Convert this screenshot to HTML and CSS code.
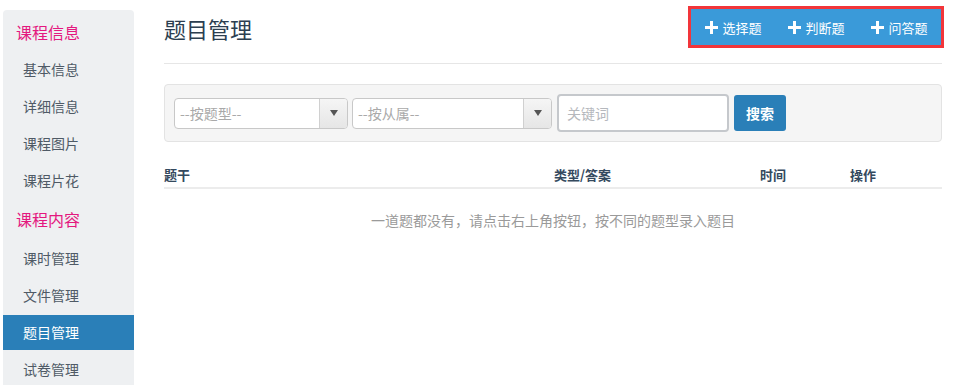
FILE: index.html
```html
<!DOCTYPE html>
<html lang="zh">
<head>
<meta charset="utf-8">
<link rel="stylesheet" href="styles.css">
</head>
<body>
<div class="layout">
  <aside class="sidebar">
    <div class="nav-group">课程信息</div>
    <a class="nav-item">基本信息</a>
    <a class="nav-item">详细信息</a>
    <a class="nav-item">课程图片</a>
    <a class="nav-item">课程片花</a>
    <div class="nav-group second">课程内容</div>
    <a class="nav-item">课时管理</a>
    <a class="nav-item">文件管理</a>
    <a class="nav-item active">题目管理</a>
    <a class="nav-item">试卷管理</a>
  </aside>
  <main class="main">
    <header class="page-header">
      <h1 class="title">题目管理</h1>
      <div class="btn-group">
        <button class="add-btn"><svg class="plus" viewBox="0 0 13 13" width="13" height="13"><rect x="5" y="0" width="3" height="13" fill="#fff"/><rect x="0" y="5" width="13" height="3" fill="#fff"/></svg>选择题</button>
        <button class="add-btn"><svg class="plus" viewBox="0 0 13 13" width="13" height="13"><rect x="5" y="0" width="3" height="13" fill="#fff"/><rect x="0" y="5" width="13" height="3" fill="#fff"/></svg>判断题</button>
        <button class="add-btn"><svg class="plus" viewBox="0 0 13 13" width="13" height="13"><rect x="5" y="0" width="3" height="13" fill="#fff"/><rect x="0" y="5" width="13" height="3" fill="#fff"/></svg>问答题</button>
      </div>
    </header>
    <div class="filter">
      <div class="select s1"><span class="ph">--按题型--</span><span class="arrow"><svg viewBox="0 0 8 6" width="8" height="6"><path d="M0 0H8L4 6Z" fill="#555"/></svg></span></div>
      <div class="select s2"><span class="ph">--按从属--</span><span class="arrow"><svg viewBox="0 0 8 6" width="8" height="6"><path d="M0 0H8L4 6Z" fill="#555"/></svg></span></div>
      <div class="keyword"><span class="ph2">关键词</span></div>
      <button class="search">搜索</button>
    </div>
    <div class="table-head">
      <div>题干</div>
      <div>类型/答案</div>
      <div>时间</div>
      <div>操作</div>
    </div>
    <p class="empty">一道题都没有，请点击右上角按钮，按不同的题型录入题目</p>
  </main>
</div>
</body>
</html>
```

FILE: styles.css
```css
* { box-sizing: border-box; }
html, body { margin: 0; padding: 0; background: #fff; }
body {
  font-family: "Noto Sans CJK SC", "Noto Sans", sans-serif;
  color: #34495e;
}
.layout {
  display: flex;
  align-items: flex-start;
}
.sidebar {
  margin: 10px 0 0 3px;
  width: 131px;
  background: #eef0f2;
  border-radius: 4px 4px 0 0;
  padding-top: 10px;
  display: flex;
  flex-direction: column;
  min-height: 375px;
}
.nav-group {
  font-size: 16px;
  line-height: 24px;
  color: #e4187f;
  padding: 0 0 0 13px;
  height: 24px;
  margin-bottom: 8px;
}
.nav-group.second {
  margin-top: 7px;
  margin-bottom: 10px;
}
.nav-item {
  display: block;
  height: 35px;
  line-height: 35px;
  margin-bottom: 2px;
  padding-left: 20px;
  font-size: 14px;
  color: #4f5a66;
}
.nav-item.active {
  background: #2a7fb8;
  color: #fff;
}
.main {
  margin-left: 30px;
  width: 778px;
}
.page-header {
  height: 64px;
  border-bottom: 1px solid #e6e6e6;
  display: flex;
  justify-content: space-between;
  align-items: flex-start;
}
.title {
  margin: 13px 0 0 0;
  font-size: 22px;
  line-height: 30px;
  font-weight: normal;
  color: #2c3e50;
}
.btn-group {
  margin-top: 6px;
  margin-right: -2px;
  border: 3px solid #f2353a;
  background: #3a9ad9;
  display: flex;
  height: 42px;
  padding: 0 0 0 1px;
}
.add-btn {
  width: 83px;
  height: 36px;
  border: 0;
  background: transparent;
  color: #fff;
  font-family: inherit;
  font-size: 13px;
  font-weight: normal;
  display: flex;
  align-items: center;
  justify-content: center;
  gap: 4px;
  padding: 0;
}
.plus { display: block; }
.filter {
  margin-top: 20px;
  height: 58px;
  background: #f5f5f5;
  border: 1px solid #e3e3e3;
  border-radius: 4px;
  display: flex;
  align-items: center;
  padding: 0 0 0 9px;
}
.select {
  height: 31px;
  border: 1px solid #c8c8c8;
  border-radius: 4px;
  background: #fff;
  display: flex;
  align-items: center;
  justify-content: space-between;
  overflow: hidden;
}
.s1 { width: 174px; }
.s2 { width: 200px; margin-left: 4px; }
.ph {
  padding-left: 5px;
  font-size: 14px;
  color: #a9a9a9;
}
.arrow {
  width: 28px;
  height: 100%;
  border-left: 1px solid #d0d0d0;
  background: linear-gradient(#f5f5f5, #e6e6e6);
  display: flex;
  align-items: center;
  justify-content: center;
}
.keyword {
  width: 172px;
  height: 38px;
  margin-left: 5px;
  border: 2px solid #c5c8cc;
  border-radius: 4px;
  background: #fff;
  display: flex;
  align-items: center;
  padding-left: 8px;
}
.ph2 { font-size: 14px; color: #b5b8bd; }
.search {
  margin-left: 5px;
  width: 52px;
  height: 36px;
  border: 0;
  border-radius: 3px;
  background: #2a7fb8;
  color: #fff;
  font-family: inherit;
  font-size: 14px;
  font-weight: bold;
}
.table-head {
  margin-top: 23px;
  display: grid;
  grid-template-columns: 390px 206px 90px 92px;
  font-size: 13px;
  font-weight: bold;
  color: #34495e;
  line-height: 20px;
  padding-bottom: 2px;
  border-bottom: 2px solid #ececec;
}
.empty {
  margin: 21px 0 0 0;
  text-align: center;
  font-size: 14px;
  line-height: 20px;
  color: #9a9a9a;
}
```
